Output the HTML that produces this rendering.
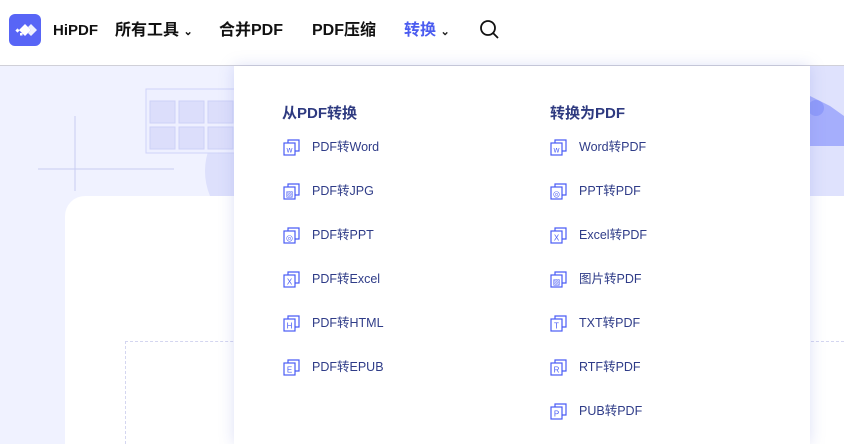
<!DOCTYPE html>
<html><head><meta charset="utf-8"><style>
*{margin:0;padding:0;box-sizing:border-box}
html{width:844px;height:444px;overflow:hidden}
body{width:844px;height:444px;overflow:hidden;background:#f0f2ff;font-family:"Liberation Sans","Noto Sans CJK SC",sans-serif;position:relative}
.hdr{position:absolute;left:0;top:0;width:844px;height:66px;background:#fff;border-bottom:1px solid #d0d0d8}
.logo{position:absolute;left:9px;top:14px;width:32px;height:32px;background:#5865f6;border-radius:6px}
.nav{position:absolute;top:20px;font-size:16px;font-weight:bold;color:#111;line-height:22px}
.card{position:absolute;left:65px;top:196px;width:779px;height:248px;background:#fff;border-radius:20px 0 0 0}
.dash{position:absolute;left:125px;top:341px;width:719px;height:103px;border-top:1.5px dashed #d4d6f0;border-left:1.5px dashed #d4d6f0}
.dd{position:absolute;left:234px;top:66px;width:576px;height:378px;background:#fff;box-shadow:0 0 14px rgba(120,130,220,.25)}
.h{position:absolute;top:36px;font-size:15px;font-weight:bold;color:#2e3a80}
.it{position:absolute;font-size:12.5px;color:#2f3c88;line-height:16px}
.ic{position:absolute;width:17px;height:17px}
</style></head><body>
<div class="hdr">
<div class="logo"><svg width="32" height="32"><g fill="#fff"><path d="M16 10l6 6-6 6-6-6z"/><path d="M22 10l6 6-6 6-3-3 3-3-3-3z" opacity=".9"/><rect x="7" y="15" width="3" height="3" transform="rotate(45 8.5 16.5)"/><rect x="11" y="19" width="2.5" height="2.5"/></g></svg></div>
<div class="nav" style="left:53px;font-size:15px">HiPDF</div>
<div class="nav" style="left:115px">所有工具 <span style="font-size:11px">⌄</span></div>
<div class="nav" style="left:219px">合并PDF</div>
<div class="nav" style="left:312px">PDF压缩</div>
<div class="nav" style="left:404px;color:#4b5cf0">转换 <span style="font-size:11px;color:#222">⌄</span></div>
<svg style="position:absolute;left:479px;top:19px" width="22" height="22"><circle cx="9" cy="9" r="7" fill="none" stroke="#111" stroke-width="1.8"/><path d="M14 14l5 5" stroke="#111" stroke-width="1.8"/></svg>
</div>
<svg style="position:absolute;left:0;top:66px" width="240" height="130">
<path d="M75 50v75M38 103h136" stroke="#c8ccf2" stroke-width="1"/>
<circle cx="270" cy="105" r="65" fill="#dde0fc"/>
<rect x="146" y="23" width="100" height="64" fill="#eef0ff" stroke="#cfd3f8"/>
<g fill="#dcdefb" stroke="#cdd1f7"><rect x="150" y="35" width="25" height="22"/><rect x="179" y="35" width="25" height="22"/><rect x="208" y="35" width="25" height="22"/><rect x="150" y="61" width="25" height="22"/><rect x="179" y="61" width="25" height="22"/><rect x="208" y="61" width="25" height="22"/></g>
</svg>
<svg style="position:absolute;left:810px;top:66px" width="34" height="130"><rect width="34" height="130" fill="#dfe2fd"/><path d="M0 30l20 10 14 10v30L0 80z" fill="#a5aefc"/><circle cx="6" cy="42" r="8" fill="#8f9bfa"/></svg>
<div class="card"></div>
<div class="dash"></div>
<div class="dd">
<div class="h" style="left:48px">从PDF转换</div>
<div class="h" style="left:316px">转换为PDF</div>
</div>
<div id="items"></div>
<script>
var L=["PDF转Word","PDF转JPG","PDF转PPT","PDF转Excel","PDF转HTML","PDF转EPUB"],LI=["w","▨","◎","X","H","E"];
var R=["Word转PDF","PPT转PDF","Excel转PDF","图片转PDF","TXT转PDF","RTF转PDF","PUB转PDF"],RI=["w","◎","X","▨","T","R","P"];
var h="";
function add(x,y,t,g){h+='<svg class="ic" style="left:'+x+'px;top:'+(y-8)+'px" viewBox="0 0 17 17"><path d="M5 4V1h11v11h-4" fill="none" stroke="#4a5cf5" stroke-width="1.2"/><rect x="1" y="4" width="11" height="12" fill="#fff" stroke="#4a5cf5" stroke-width="1.2"/><text x="6.5" y="13.5" font-size="8" text-anchor="middle" fill="#4a5cf5" font-family="Liberation Sans">'+g+'</text></svg><div class="it" style="left:'+(x+29)+'px;top:'+(y-8)+'px">'+t+'</div>';}
L.forEach(function(t,i){add(283,147+44*i,t,LI[i])});
R.forEach(function(t,i){add(550,147+44*i,t,RI[i])});
document.getElementById("items").innerHTML=h;
</script>
</body></html>
